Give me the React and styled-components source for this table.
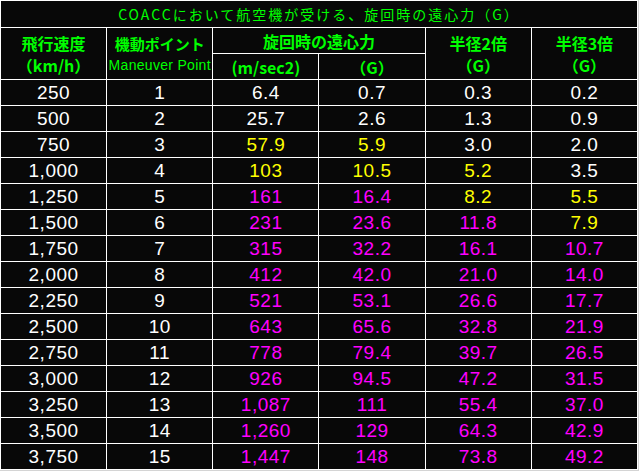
import React from 'react';
import styled, { createGlobalStyle } from 'styled-components';

const GlobalStyle = createGlobalStyle`
  html, body {
    margin: 0;
    padding: 0;
    background: #d4d4d4;
  }
`

const Table = styled.table`
  width: 638px;
  table-layout: fixed;
  border-collapse: collapse;
  background: #080808;
  font-family: "Liberation Sans", "Noto Sans CJK JP", sans-serif;
`

const Title = styled.th`
  height: 26px;
  padding: 0;
  border: 1px solid #fff;
  color: #00ff00;
  font-family: "Noto Sans CJK JP", sans-serif;
  font-weight: normal;
  font-size: 14px;
  letter-spacing: 2px;
  text-align: center;
`

const Head = styled.th`
  height: 25px;
  padding: 0;
  border: 1px solid #fff;
  color: #00ff00;
  font-family: "Noto Sans CJK JP", sans-serif;
  font-weight: bold;
  font-size: ${p => p.$size || 16}px;
  line-height: 22px;
  text-align: center;
  vertical-align: middle;
`

const Line = styled.span`
  display: block;
  line-height: 22px;
`

const Sub = styled.span`
  display: block;
  font-family: "Liberation Sans", sans-serif;
  font-weight: normal;
  font-size: 14px;
  line-height: 20px;
  letter-spacing: 0.3px;
`

const Cell = styled.td`
  height: 25px;
  padding: 0;
  border: 1px solid #fff;
  color: ${p => p.$color || '#fff'};
  font-size: 19px;
  letter-spacing: 0.5px;
  text-align: center;
  vertical-align: middle;
`

const rows = [
  ['250', '1', '6.4', '0.7', '0.3', '0.2'],
  ['500', '2', '25.7', '2.6', '1.3', '0.9'],
  ['750', '3', '57.9', '5.9', '3.0', '2.0'],
  ['1,000', '4', '103', '10.5', '5.2', '3.5'],
  ['1,250', '5', '161', '16.4', '8.2', '5.5'],
  ['1,500', '6', '231', '23.6', '11.8', '7.9'],
  ['1,750', '7', '315', '32.2', '16.1', '10.7'],
  ['2,000', '8', '412', '42.0', '21.0', '14.0'],
  ['2,250', '9', '521', '53.1', '26.6', '17.7'],
  ['2,500', '10', '643', '65.6', '32.8', '21.9'],
  ['2,750', '11', '778', '79.4', '39.7', '26.5'],
  ['3,000', '12', '926', '94.5', '47.2', '31.5'],
  ['3,250', '13', '1,087', '111', '55.4', '37.0'],
  ['3,500', '14', '1,260', '129', '64.3', '42.9'],
  ['3,750', '15', '1,447', '148', '73.8', '49.2'],
]

// colour by G value
const gColor = (g) => {
  const v = parseFloat(g)
  if (v > 10.6) return '#ff00ff'
  if (v >= 5) return '#ffff00'
  return '#fff'
}

export default function App() {
  return (
    <>
      <GlobalStyle />
      <Table>
        <thead>
          <tr>
            <Title colSpan={6}>COACCにおいて航空機が受ける、旋回時の遠心力（G）</Title>
          </tr>
          <tr>
            <Head rowSpan={2}><Line>飛行速度</Line><Line>（km/h）</Line></Head>
            <Head rowSpan={2} $size={15}><Line>機動ポイント</Line><Sub>Maneuver Point</Sub></Head>
            <Head colSpan={2}>旋回時の遠心力</Head>
            <Head rowSpan={2}><Line>半径2倍</Line><Line>（G）</Line></Head>
            <Head rowSpan={2}><Line>半径3倍</Line><Line>（G）</Line></Head>
          </tr>
          <tr>
            <Head>(m/sec2)</Head>
            <Head>（G）</Head>
          </tr>
        </thead>
        <tbody>
          {rows.map(r => (
            <tr key={r[0]}>
              <Cell>{r[0]}</Cell>
              <Cell>{r[1]}</Cell>
              <Cell $color={gColor(r[3])}>{r[2]}</Cell>
              <Cell $color={gColor(r[3])}>{r[3]}</Cell>
              <Cell $color={gColor(r[4])}>{r[4]}</Cell>
              <Cell $color={gColor(r[5])}>{r[5]}</Cell>
            </tr>
          ))}
        </tbody>
      </Table>
    </>
  )
}
